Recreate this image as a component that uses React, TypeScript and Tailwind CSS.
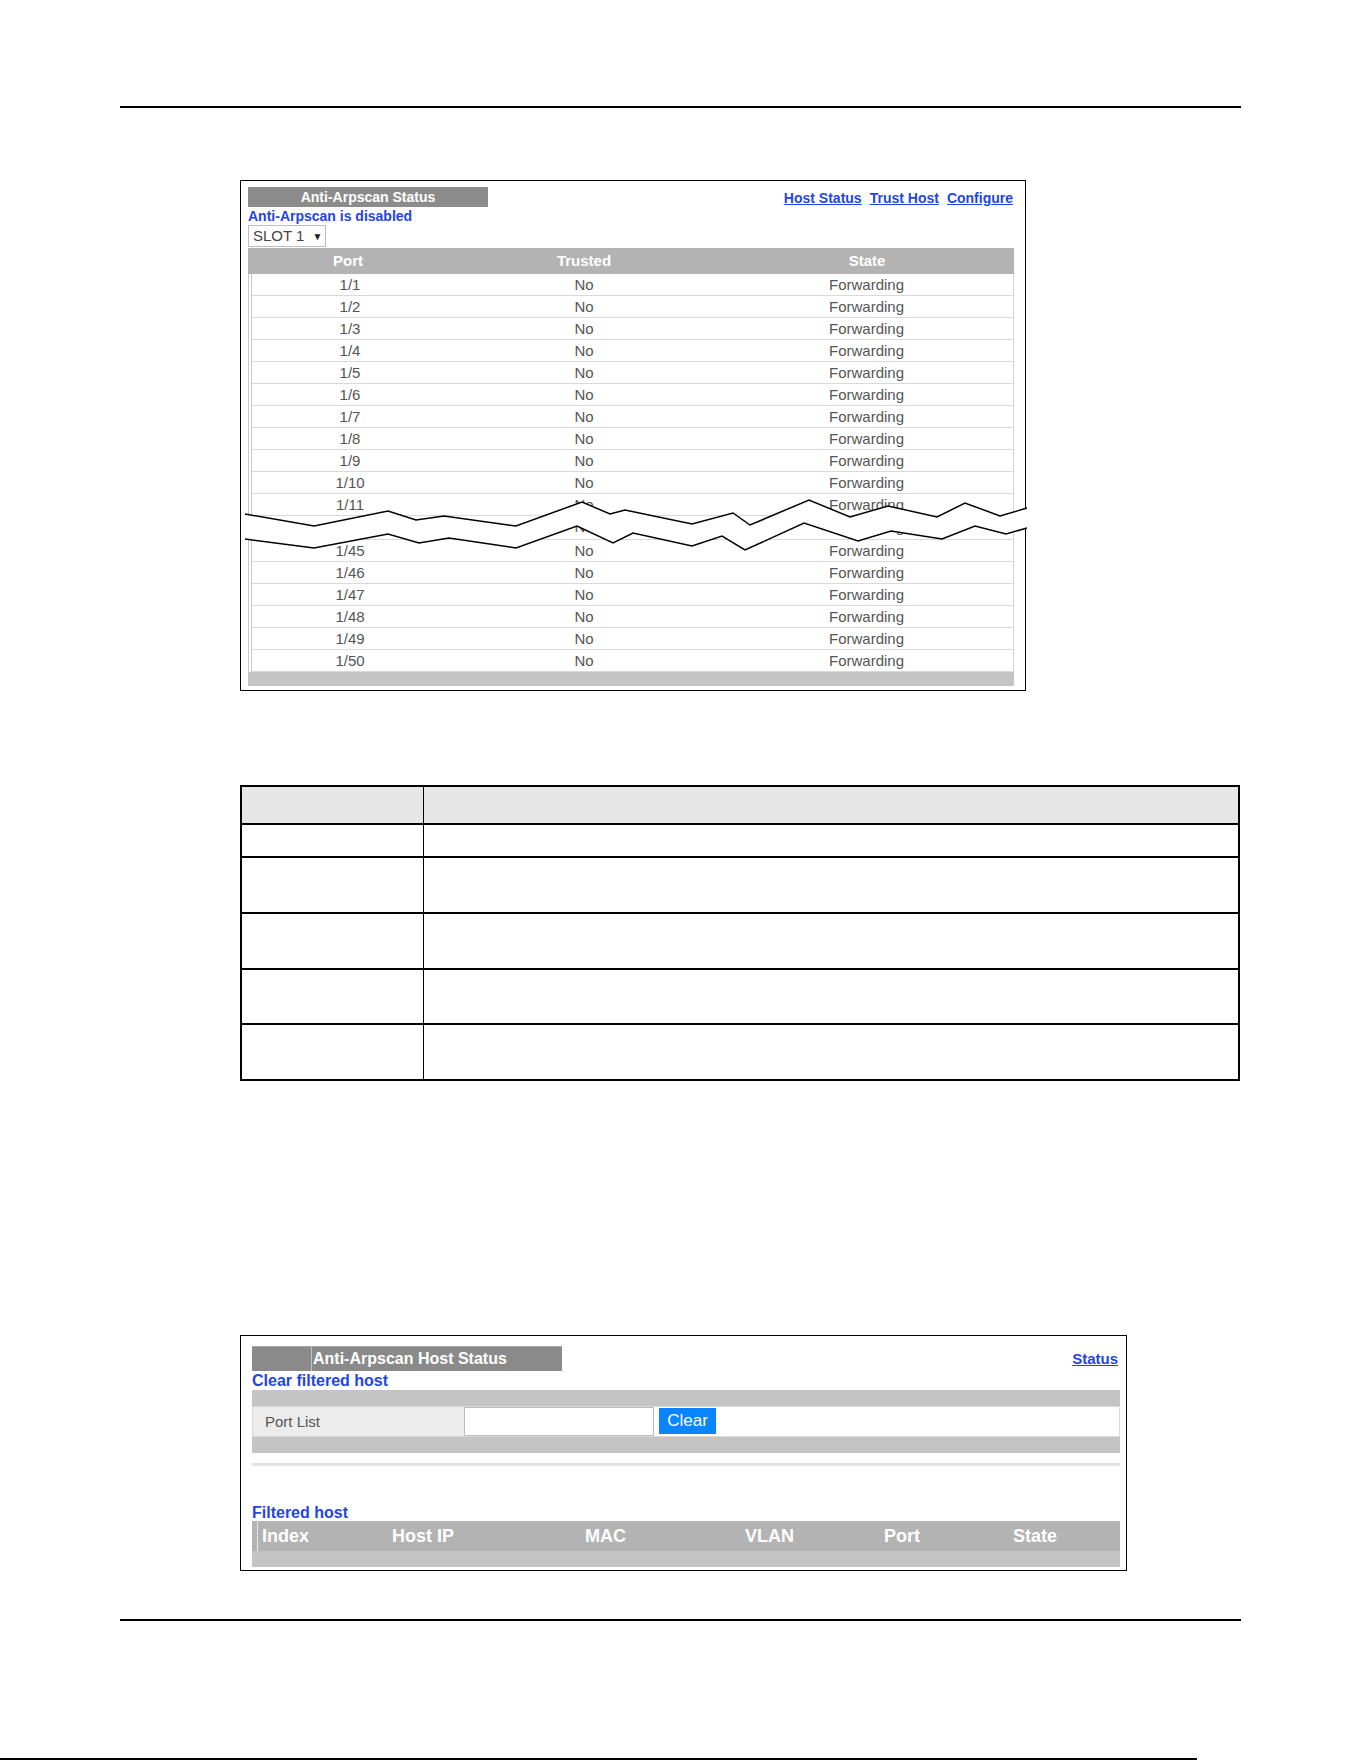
import React from "react";

const topRows = ["1/1", "1/2", "1/3", "1/4", "1/5", "1/6", "1/7", "1/8", "1/9", "1/10", "1/11", "1/12"];
const bottomRows = ["1/45", "1/46", "1/47", "1/48", "1/49", "1/50"];
const ports = [...topRows, ...bottomRows];

// break marks drawn across the port list
const upperEdge: [number, number][] = [
  [245, 514], [314, 526], [388, 511], [416, 520], [444, 516], [516, 526], [582, 502], [610, 514],
  [625, 510], [692, 524], [733, 513], [750, 525], [809, 500], [850, 517], [888, 506], [937, 517],
  [965, 503], [1000, 516], [1027, 508],
];
const lowerEdge: [number, number][] = [
  [245, 539], [314, 548], [388, 534], [419, 543], [449, 538], [516, 548], [577, 526], [613, 543],
  [633, 533], [692, 546], [722, 536], [745, 550], [804, 523], [858, 541], [891, 531], [942, 539],
  [975, 526], [1006, 534], [1027, 528],
];
const pts = (p: [number, number][]) => p.map(([x, y]) => `${x},${y}`).join(" ");

const descRows = [38, 33, 56, 56, 55, 54];

export default function App() {
  return (
    <div className="relative w-[1361px] h-[1761px] bg-white overflow-hidden font-['Liberation_Sans',Arial,sans-serif]">
      <div className="pt-[106px]">
        <div className="ml-[120px] w-[1121px] h-[2px] bg-black" />
      </div>

      {/* Anti-Arpscan Status panel */}
      <div className="ml-[240px] mt-[72px] w-[786px] border border-black pl-[7px] pr-[11px] pt-[6px] pb-[4px]">
        <div className="flex items-start justify-between">
          <div className="w-[240px] h-[20px] bg-[#8c8c8c] text-white font-bold text-[14px] leading-[20px] text-center">
            Anti-Arpscan Status
          </div>
          <div className="flex gap-[8px] pt-[3px] pr-[1px] text-[14px] leading-[16px] font-bold text-[#1f45e6] underline">
            <span>Host Status</span>
            <span>Trust Host</span>
            <span>Configure</span>
          </div>
        </div>
        <div className="h-[18px] leading-[18px] text-[14px] font-bold text-[#1f45e6]">Anti-Arpscan is disabled</div>
        <div className="w-[78px] h-[22px] border border-[#bdbdbd] bg-white flex items-center pl-[4px] gap-[8px] text-[15px] text-[#444]">
          <span>SLOT 1</span>
          <span className="text-[10px] text-[#222]">▼</span>
        </div>
        <div className="mt-[1px] w-[766px]">
          <div className="grid grid-cols-[200px_272px_294px] h-[26px] bg-[#b3b3b3] text-white font-bold text-[15px] leading-[26px] text-center">
            <div>Port</div>
            <div>Trusted</div>
            <div>State</div>
          </div>
          <div className="border-l-[4px] border-double border-[#c8c8c8] border-r border-r-[#d6d6d6]">
            {ports.map((p) => (
              <div
                key={p}
                className={`grid grid-cols-[196px_272px_293px] ${p === "1/12" ? "h-[24px]" : "h-[22px]"} border-b border-[#d9d9d9] text-[15px] leading-[21px] text-center text-[#555]`}
              >
                <div>{p}</div>
                <div>No</div>
                <div>Forwarding</div>
              </div>
            ))}
          </div>
          <div className="h-[14px] bg-[#c4c4c4]" />
        </div>
      </div>

      {/* field description table */}
      <div className="ml-[240px] mt-[94px] w-[1000px] border-2 border-black">
        {descRows.map((h, i) => (
          <div
            key={i}
            style={{ height: h }}
            className={`grid grid-cols-[182px_1fr] ${i < descRows.length - 1 ? "border-b-2 border-black" : ""} ${i === 0 ? "bg-[#e6e6e6]" : ""}`}
          >
            <div className="border-r border-black" />
            <div />
          </div>
        ))}
      </div>

      {/* Anti-Arpscan Host Status panel */}
      <div className="ml-[240px] mt-[254px] w-[887px] border border-black pl-[11px] pr-[6px] pt-[10px] pb-[3px]">
        <div className="flex items-start justify-between">
          <div className="flex w-[310px] h-[25px] bg-[#8a8a8a] border-t border-[#a8a8a8]">
            <div className="w-[59px]" />
            <div className="w-[1px] bg-[#c2c2c2]" />
            <div className="pl-[1px] text-white font-bold text-[16px] leading-[23px]">Anti-Arpscan Host Status</div>
          </div>
          <div className="pr-[2px] text-[15px] leading-[25px] font-bold text-[#1f45e6] underline">Status</div>
        </div>
        <div className="h-[19px] leading-[20px] text-[16px] font-bold text-[#1f45e6]">Clear filtered host</div>
        <div className="bg-[#c4c4c4] py-[16px]">
          <div className="flex h-[31px] bg-white border border-[#d8d8d8]">
            <div className="w-[211px] bg-[#ececec] pl-[12px] text-[15px] leading-[29px] text-[#555]">Port List</div>
            <div className="w-[190px] h-[29px] border border-[#bdbdbd] bg-white" />
            <div className="ml-[5px] mt-[1px] w-[57px] h-[26px] bg-[#0a84ff] text-white text-[17px] leading-[26px] text-center">
              Clear
            </div>
          </div>
        </div>
        <div className="mt-[10px] h-[3px] bg-[#e2e2e2]" />
        <div className="mt-[37px] h-[18px] leading-[19px] text-[16px] font-bold text-[#1f45e6]">Filtered host</div>
        <div className="h-[30px] bg-[#b3b3b3] pl-[5px] flex">
          <div className="w-[1px] bg-[#e6e6e6]" />
          <div className="pl-[4px] grid grid-cols-[130px_193px_160px_139px_129px_107px] text-white font-bold text-[18px] leading-[30px]">
            <div>Index</div>
            <div>Host IP</div>
            <div>MAC</div>
            <div>VLAN</div>
            <div>Port</div>
            <div>State</div>
          </div>
        </div>
        <div className="h-[16px] bg-[#c4c4c4]" />
      </div>

      <div className="ml-[120px] mt-[48px] w-[1121px] h-[2px] bg-black" />
      <div className="mt-[137px] w-[1197px] h-[2px] bg-black" />

      <svg
        className="absolute left-0 top-0 pointer-events-none"
        width={1361}
        height={700}
        viewBox="0 0 1361 700"
      >
        <polygon points={`${pts(upperEdge)} ${pts([...lowerEdge].reverse())}`} fill="#ffffff" />
        <polyline points={pts(upperEdge)} fill="none" stroke="#000" strokeWidth={1.5} strokeLinejoin="miter" />
        <polyline points={pts(lowerEdge)} fill="none" stroke="#000" strokeWidth={1.5} strokeLinejoin="miter" />
      </svg>
    </div>
  );
}
